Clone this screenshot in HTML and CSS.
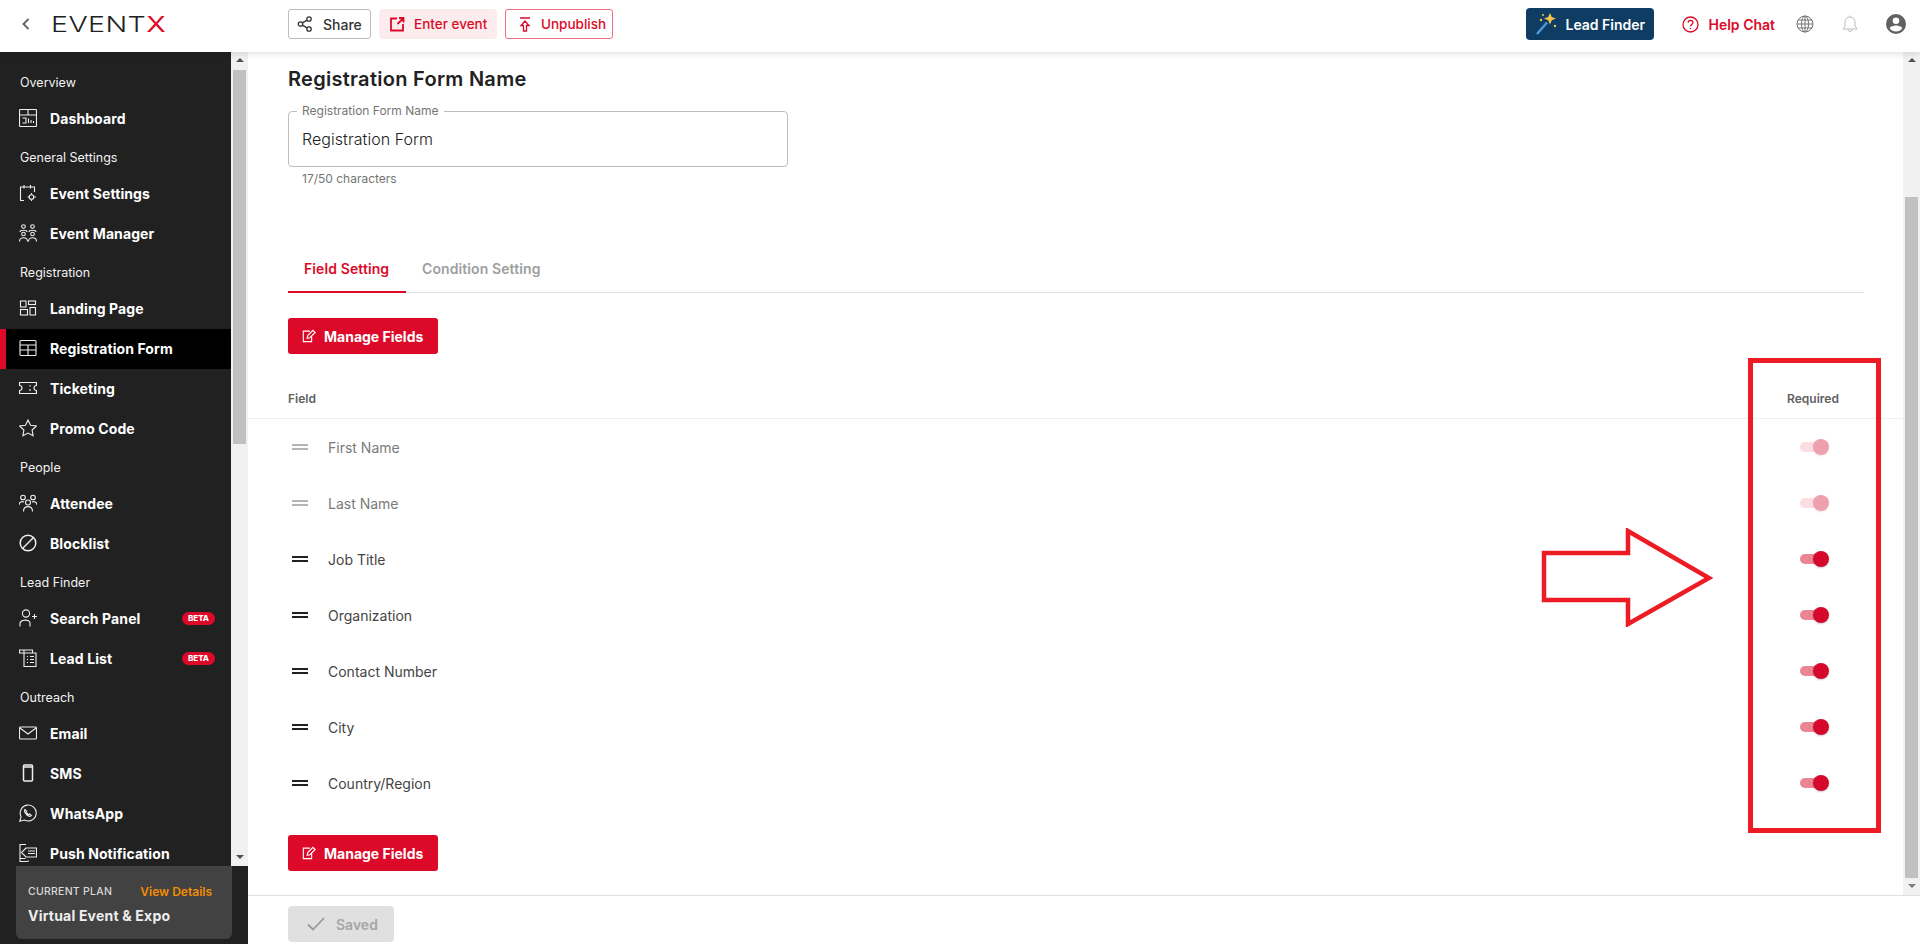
FILE: index.html
```html
<!DOCTYPE html>
<html lang="en">
<head>
<meta charset="utf-8">
<title>EventX Registration Form</title>
<link rel="stylesheet" href="styles.css">
</head>
<body>
<header class="topbar">
  <div class="brand">
    <svg class="back" viewBox="0 0 10 14"><path d="M7.500 2 2.500 7l5 5"/></svg>
    <span class="logo">EVENT<span class="logo-x">X</span></span>
  </div>
  <div class="actions">
    <button class="btn btn-share"><svg class="ic16" viewBox="0 0 16 16"><circle cx="3.500" cy="8" r="2.200"/><circle cx="12" cy="3" r="2.200"/><circle cx="12" cy="13" r="2.200"/><path d="M5.400 6.900 10.100 4.100M5.400 9.100l4.700 2.800"/></svg>Share</button>
    <button class="btn btn-enter"><svg class="ic16" viewBox="0 0 16 16"><path d="M8 2.500H2v12h12V8M8.500 8 14 2.500M10 2h4.500v4.500"/></svg>Enter event</button>
    <button class="btn btn-unpublish"><svg class="ic16" viewBox="0 0 16 16"><path d="M3 2h10M8 5 4 9.500h2.500V15h3V9.500H12z"/></svg>Unpublish</button>
  </div>
  <div class="tools">
    <button class="lead-finder"><svg class="wand" viewBox="0 0 22 22"><path class="wand-stick" d="M2 21 12 9.500"/><path class="wand-star" d="M15 0l1.800 4L21 5.500l-4.200 1.700L15 11.500l-1.800-4.300L9 5.500l4.200-1.500z"/><circle class="wand-star" cx="6" cy="7" r="1.200"/><circle class="wand-star" cx="20" cy="13" r="1.200"/><circle class="wand-star" cx="8" cy="2" r="1"/></svg>Lead Finder</button>
    <span class="help"><svg class="ic17" viewBox="0 0 17 17"><circle cx="8.500" cy="8.500" r="7.500"/><path d="M6.200 6.700c0-3 4.700-3 4.700 0 0 1.900-2.400 1.900-2.400 3.700M8.500 12v1"/></svg>Help Chat</span>
    <svg class="globe" viewBox="0 0 18 18"><circle cx="9" cy="9" r="8"/><ellipse cx="9" cy="9" rx="3.500" ry="8"/><path d="M1 9h16M2 5h14M2 13h14M9 1v16"/></svg>
    <svg class="bell" viewBox="0 0 18 20"><path d="M2 15h14l-2-3V8a5 5 0 0 0-10 0v4zM7 15.500a2 2 0 0 0 4 0M9 3V1.500"/></svg>
    <svg class="avatar" viewBox="0 0 20 20"><path d="M10 0a10 10 0 1 0 0 20 10 10 0 0 0 0-20zm0 3.500a3.300 3.300 0 1 1 0 6.600 3.300 3.300 0 0 1 0-6.600zm0 14a8 8 0 0 1-6.300-3.200c.6-1.800 4-2.700 6.300-2.700s5.700.9 6.300 2.700a8 8 0 0 1-6.300 3.200z"/></svg>
  </div>
</header>

<div class="page">
  <aside class="sidebar">
    <div class="side-scroll">
      <nav class="nav">
        <div class="nav-label">Overview</div>
        <a class="nav-item"><svg class="nav-ic" viewBox="0 0 18 18"><rect x=".5" y=".5" width="17" height="17" rx="1"/><path d="M.5 6h17M9 .5V6M3.500 9h3.500v5H3.500M9.500 9.500V14M12 11v3M14.500 12v2"/></svg>Dashboard</a>
        <div class="nav-label">General Settings</div>
        <a class="nav-item"><svg class="nav-ic" viewBox="0 0 18 18"><path d="M5 16.500H1.500V3h14v5M5 1v3.500M11.500 1v3.500"/><circle cx="12.500" cy="13" r="2.300"/><path d="M12.500 9v1.500M12.500 15.500V17M8.500 13H10M15 13h2"/></svg>Event Settings</a>
        <a class="nav-item"><svg class="nav-ic" viewBox="0 0 18 18"><circle cx="4.500" cy="2.500" r="1.800"/><circle cx="13.500" cy="2.500" r="1.800"/><circle cx="4.500" cy="10" r="1.800"/><circle cx="13.500" cy="10" r="1.800"/><path d="M1 8c0-2.300 7-2.300 7 0M10 8c0-2.300 7-2.300 7 0M.5 17.500c0-5 8-5 8 0M9.500 17.500c0-5 8-5 8 0"/></svg>Event Manager</a>
        <div class="nav-label">Registration</div>
        <a class="nav-item"><svg class="nav-ic" viewBox="0 0 18 18"><rect x="1.500" y="2" width="5.500" height="6"/><rect x="9.500" y="2" width="7" height="3.500"/><rect x="1.500" y="10.500" width="7" height="5.500"/><rect x="11" y="8.500" width="5.500" height="7.500"/></svg>Landing Page</a>
        <a class="nav-item nav-active"><svg class="nav-ic" viewBox="0 0 18 18"><rect x="1" y="1.500" width="16" height="15" rx="1"/><path d="M1 6h16M1 11h16M9 6v10.500"/></svg>Registration Form</a>
        <a class="nav-item"><svg class="nav-ic" viewBox="0 0 18 18"><path d="M.5 3.500h17v3a2.500 2.500 0 0 0 0 5v3H.5v-3a2.500 2.500 0 0 0 0-5zM11 6v1.500M11 10v2"/></svg>Ticketing</a>
        <a class="nav-item"><svg class="nav-ic" viewBox="0 0 18 18"><path d="m9 1 2.500 5.200 5.900.8-4.300 4 1 5.800L9 14.100l-5.100 2.700 1-5.800-4.300-4 5.900-.8z"/></svg>Promo Code</a>
        <div class="nav-label">People</div>
        <a class="nav-item"><svg class="nav-ic" viewBox="0 0 18 18"><circle cx="4" cy="3.500" r="2.300"/><circle cx="14" cy="3.500" r="2.300"/><circle cx="9" cy="8.500" r="2.500"/><path d="M0 11c0-3 3-4 5-3M18 11c0-3-3-4-5-3M4.500 17.500c0-6.500 9-6.500 9 0"/></svg>Attendee</a>
        <a class="nav-item"><svg class="nav-ic nav-ic-bold" viewBox="0 0 18 18"><circle cx="9" cy="9" r="7.800"/><path d="M14.500 3.500 3.500 14.500"/></svg>Blocklist</a>
        <div class="nav-label">Lead Finder</div>
        <a class="nav-item"><svg class="nav-ic" viewBox="0 0 18 18"><circle cx="7" cy="4.500" r="3.600"/><path d="M1 17.500v-2.500c0-5 10-5 10-1v3.500M13 7.500h5M15.500 5v5"/></svg>Search Panel<span class="beta">BETA</span></a>
        <a class="nav-item"><svg class="nav-ic" viewBox="0 0 18 18"><path d="M5 4H.5V1h13v3M5 1.500V17.500h12V4H5M8 7.500h1M11 7.500h4M8 10.500h1M11 10.500h4M8 13.500h1M11 13.500h4"/></svg>Lead List<span class="beta">BETA</span></a>
        <div class="nav-label">Outreach</div>
        <a class="nav-item"><svg class="nav-ic" viewBox="0 0 18 18"><rect x=".5" y="3" width="17" height="12" rx="1"/><path d="m1 4 8 6 8-6"/></svg>Email</a>
        <a class="nav-item"><svg class="nav-ic nav-ic-bold" viewBox="0 0 18 18"><rect x="4.500" y="1" width="9" height="16" rx="1"/><path d="M4.500 3h9"/></svg>SMS</a>
        <a class="nav-item"><svg class="nav-ic" viewBox="0 0 18 18"><path d="M.8 17.200l1.300-4.500A8 8 0 1 1 5.300 16z"/><path d="M6 5.500c-1.500 1.500 0 3.500 1.500 5s3.500 2.500 5 1.200l-1.800-1.700-1.200.7-2.500-2.500.7-1.200z"/></svg>WhatsApp</a>
        <a class="nav-item"><svg class="nav-ic" viewBox="0 0 18 18"><path d="M7 .5H1v17h6l3-.5M1.500 14.500h5M7 4 2.500 8.500 7 13h10.500V4zM9 7h7M9 9.500h7"/></svg>Push Notification</a>
      </nav>
      <div class="sb sb-side">
        <span class="arrow-up"></span>
        <span class="thumb thumb-side"></span>
        <span class="arrow-down"></span>
      </div>
    </div>
    <div class="plan">
      <div class="plan-top"><span class="plan-kicker">CURRENT PLAN</span><span class="plan-link">View Details</span></div>
      <div class="plan-name">Virtual Event &amp; Expo</div>
    </div>
  </aside>

  <main class="main">
    <div class="main-scroll">
      <div class="content">
        <section class="form-head">
          <h1 class="title">Registration Form Name</h1>
          <div class="field">
            <span class="field-label">Registration Form Name</span>
            <span class="field-value">Registration Form</span>
          </div>
          <div class="helper">17/50 characters</div>
          <div class="tabs">
            <span class="tab tab-on">Field Setting</span>
            <span class="tab tab-two">Condition Setting</span>
          </div>
          <button class="manage"><svg class="ic14" viewBox="0 0 16 16"><path d="M9 2.500H1.500v12h9.500V8M6 10.500l.5-3L12.500 1.500l2.500 2.500-6 6z"/></svg>Manage Fields</button>
        </section>

        <div class="thead"><span>Field</span><span class="thead-req">Required</span></div>
        <div class="row row-off"><span class="grip"></span><span class="name">First Name</span><span class="sw"><span class="knob"></span></span></div>
        <div class="row row-off"><span class="grip"></span><span class="name">Last Name</span><span class="sw"><span class="knob"></span></span></div>
        <div class="row"><span class="grip"></span><span class="name">Job Title</span><span class="sw"><span class="knob"></span></span></div>
        <div class="row"><span class="grip"></span><span class="name">Organization</span><span class="sw"><span class="knob"></span></span></div>
        <div class="row"><span class="grip"></span><span class="name">Contact Number</span><span class="sw"><span class="knob"></span></span></div>
        <div class="row"><span class="grip"></span><span class="name">City</span><span class="sw"><span class="knob"></span></span></div>
        <div class="row"><span class="grip"></span><span class="name">Country/Region</span><span class="sw"><span class="knob"></span></span></div>

        <section class="form-foot">
          <button class="manage"><svg class="ic14" viewBox="0 0 16 16"><path d="M9 2.500H1.500v12h9.500V8M6 10.500l.5-3L12.500 1.500l2.500 2.500-6 6z"/></svg>Manage Fields</button>
        </section>
      </div>
      <div class="sb sb-main">
        <span class="arrow-up"></span>
        <span class="thumb thumb-main"></span>
        <span class="arrow-down arrow-light"></span>
      </div>
    </div>
    <footer class="footer">
      <button class="saved"><svg class="check" viewBox="0 0 18 14"><path d="M1 7.500 6 12.500 17 1"/></svg>Saved</button>
    </footer>
  </main>
</div>

<svg class="mark-arrow" viewBox="0 0 172 99"><path d="M3 25h84V3l81 47-81 46V72H3z"/></svg>
<div class="mark-box"></div>
</body>
</html>
```
FILE: styles.css
```css
* { box-sizing: border-box; }
html, body { margin: 0; height: 944px; overflow: hidden; }
body { font-family: Inter, "Noto Sans", sans-serif; background: #fff; color: #212121; }
button { font-family: inherit; cursor: pointer; }
svg { display: block; flex: none; fill: none; stroke: currentColor; }

.topbar { position: relative; z-index: 2; height: 52px; padding-bottom: 4px; display: flex; align-items: center; background: #fff; box-shadow: 0 2px 6px rgba(0,0,0,.12); }
.brand { width: 288px; display: flex; align-items: center; padding-left: 21px; color: #616161; }
.back { width: 10px; height: 14px; stroke-width: 1.800; margin-right: 20px; }
.logo { font-size: 22px; line-height: 24px; font-weight: 300; letter-spacing: .3px; color: #212121; transform: scaleX(1.300); transform-origin: left; }
.logo-x { color: #dc0a28; font-weight: 400; }

.actions { display: flex; gap: 8px; }
.btn { height: 30px; display: flex; align-items: center; gap: 9px; border-radius: 3px; background: #fff; font-size: 13.500px; font-weight: 500; padding: 0 0 0 8px; border: 1px solid #bdbdbd; white-space: nowrap; }
.btn-share { width: 83px; gap: 10px; color: #333; font-size: 14px; }
.btn-enter { width: 118px; padding-left: 9px; color: #dc0a28; background: #fdecee; border-color: #fdecee; }
.btn-unpublish { width: 108px; padding-left: 11px; gap: 8px; color: #dc0a28; border-color: #ee7085; }
.ic16 { width: 16px; height: 16px; stroke-width: 1.300; }
.btn-enter .ic16 { stroke-width: 1.800; }

.tools { margin-left: auto; display: flex; align-items: center; padding-right: 14px; }
.lead-finder { width: 128px; height: 32px; display: flex; align-items: center; gap: 8px; padding: 0 0 0 9px; border: 0; border-radius: 4px; background: #0e3c62; color: #fff; font-size: 14px; font-weight: 600; margin-right: 28px; }
.wand { width: 22px; height: 22px; }
.wand-stick { stroke: #4a9be0; stroke-width: 2.500; }
.wand-star { fill: #f6c24a; stroke: none; }
.help { display: flex; align-items: center; gap: 9px; font-size: 14px; font-weight: 600; color: #dc0a28; margin-right: 21px; }
.ic17 { width: 17px; height: 17px; stroke-width: 1.300; }
.globe { width: 18px; height: 18px; color: #757575; stroke-width: 1; margin-right: 27px; }
.bell { width: 18px; height: 20px; color: #bdbdbd; stroke-width: 1; margin-right: 27px; }
.avatar { width: 20px; height: 20px; fill: #616161; stroke: none; }

.page { height: 892px; display: flex; }
.sidebar { width: 248px; flex: none; background: #212121; display: flex; flex-direction: column; }
.side-scroll { height: 814px; display: flex; }
.nav { width: 231px; overflow: hidden; padding-top: 12px; color: #fff; }
.nav-label { height: 35px; padding: 11px 0 0 20px; font-size: 12.500px; line-height: 16px; color: #f2f2f2; }
.nav-item { height: 40px; display: flex; align-items: center; padding: 0 0 2px 19px; gap: 13px; font-size: 14px; font-weight: 700; letter-spacing: .1px; white-space: nowrap; }
.nav-ic { width: 18px; height: 18px; stroke: #eee; stroke-width: 1.100; }
.nav-ic-bold { stroke-width: 1.500; }
.nav-active { background: #000; box-shadow: inset 6px 0 0 #dc0a28; }
.beta { margin-left: auto; margin-right: 16px; width: 33px; height: 13px; border-radius: 7px; background: #dc0a28; font-size: 8px; line-height: 13px; font-weight: 800; letter-spacing: 0; text-align: center; }

.sb { width: 17px; flex: none; background: #f1f1f1; display: flex; flex-direction: column; align-items: center; padding-top: 6px; }
.thumb { display: block; width: 13px; background: #c1c1c1; }
.thumb-side { height: 374px; margin-top: 8px; }
.thumb-main { height: 681px; margin-top: 135px; }
.arrow-up, .arrow-down { display: block; width: 0; height: 0; border-left: 4px solid transparent; border-right: 4px solid transparent; }
.arrow-up { border-bottom: 4px solid #505050; }
.arrow-down { border-top: 4px solid #505050; margin-top: auto; margin-bottom: 7px; }
.arrow-light { border-top-color: #7d7d7d; }

.plan { width: 216px; height: 73px; margin-left: 16px; padding: 17px 20px 0 12px; background: #424242; border-radius: 0 0 6px 6px; }
.plan-top { display: flex; justify-content: space-between; align-items: center; height: 16px; }
.plan-kicker { font-size: 10.500px; font-weight: 500; letter-spacing: .25px; color: #d8d8d8; }
.plan-link { font-size: 12px; font-weight: 600; color: #f28c00; }
.plan-name { margin-top: 8px; font-size: 14px; font-weight: 700; letter-spacing: .2px; line-height: 18px; color: #eee; }

.main { flex: 1; min-width: 0; display: flex; flex-direction: column; }
.main-scroll { height: 843px; display: flex; }
.content { flex: 1; min-width: 0; }
.form-head { padding: 13px 39px 0 40px; }
.title { margin: 0; font-size: 20px; line-height: 28px; font-weight: 600; letter-spacing: .28px; color: #212121; }
.field { position: relative; width: 500px; height: 56px; margin-top: 18px; padding: 0 13px; display: flex; align-items: center; border: 1px solid #bdbdbd; border-radius: 4px; }
.field-label { position: absolute; left: 8px; top: -8px; padding: 0 5px; background: #fff; font-size: 12px; line-height: 14px; color: #757575; }
.field-value { font-size: 16px; line-height: 24px; font-weight: 300; letter-spacing: .05px; color: #222; }
.helper { margin: 4px 0 0 14px; font-size: 12px; line-height: 16px; color: #757575; }
.tabs { height: 48px; margin-top: 58px; display: flex; border-bottom: 1px solid #e0e0e0; }
.tab { width: 118px; padding: 0 0 0 16px; display: flex; align-items: center; white-space: nowrap; font-size: 14px; font-weight: 600; letter-spacing: .1px; color: #9e9e9e; }
.tab-two { width: 152px; }
.tab-on { height: 48px; color: #dc0a28; border-bottom: 2px solid #dc0a28; }
.manage { width: 150px; height: 36px; margin-top: 25px; padding: 0 0 0 14px; display: flex; align-items: center; gap: 8px; border: 0; border-radius: 3px; background: #dc0a28; color: #fff; font-size: 14px; font-weight: 700; }
.ic14 { width: 14px; height: 14px; stroke-width: 1.300; }

.thead { height: 41px; margin-top: 24px; padding: 0 60px 0 40px; display: flex; align-items: center; justify-content: space-between; border-bottom: 1px solid #f0f0f0; font-size: 12px; font-weight: 600; color: #616161; }
.thead-req { width: 60px; text-align: center; white-space: nowrap; }
.row { height: 56px; padding: 0 77px 0 44px; display: flex; align-items: center; font-size: 14px; color: #444; }
.row-off { color: #7a7a7a; }
.grip { width: 16px; height: 6px; margin-right: 20px; border-top: 2px solid #212121; border-bottom: 2px solid #212121; }
.row-off .grip { border-color: #b5b5b5; }
.name { flex: 1; }
.sw { position: relative; width: 26px; height: 10px; border-radius: 5px; background: rgba(220,10,40,.5); }
.knob { position: absolute; right: -3px; top: -3px; width: 16px; height: 16px; border-radius: 50%; background: #d6092a; box-shadow: 0 1px 2px rgba(0,0,0,.2); }
.row-off .sw { opacity: .38; background: rgba(220,10,40,.35); }

.form-foot { padding: 24px 40px 0; }
.form-foot .manage { margin-top: 0; }

.footer { height: 49px; padding: 10px 0 0 40px; border-top: 1px solid #e0e0e0; }
.saved { width: 106px; height: 36px; padding: 0 0 0 19px; display: flex; align-items: center; gap: 11px; border: 0; border-radius: 4px; background: #e0e0e0; color: #a6a6a6; font-size: 14px; font-weight: 600; }
.check { width: 18px; height: 14px; stroke: #999; stroke-width: 1.800; }

.mark-box { position: absolute; left: 1748px; top: 358px; width: 133px; height: 475px; border: 5px solid #ed1c24; }
.mark-arrow { position: absolute; left: 1541px; top: 528px; width: 172px; height: 99px; stroke: #ed1c24; stroke-width: 4.500; }
```
